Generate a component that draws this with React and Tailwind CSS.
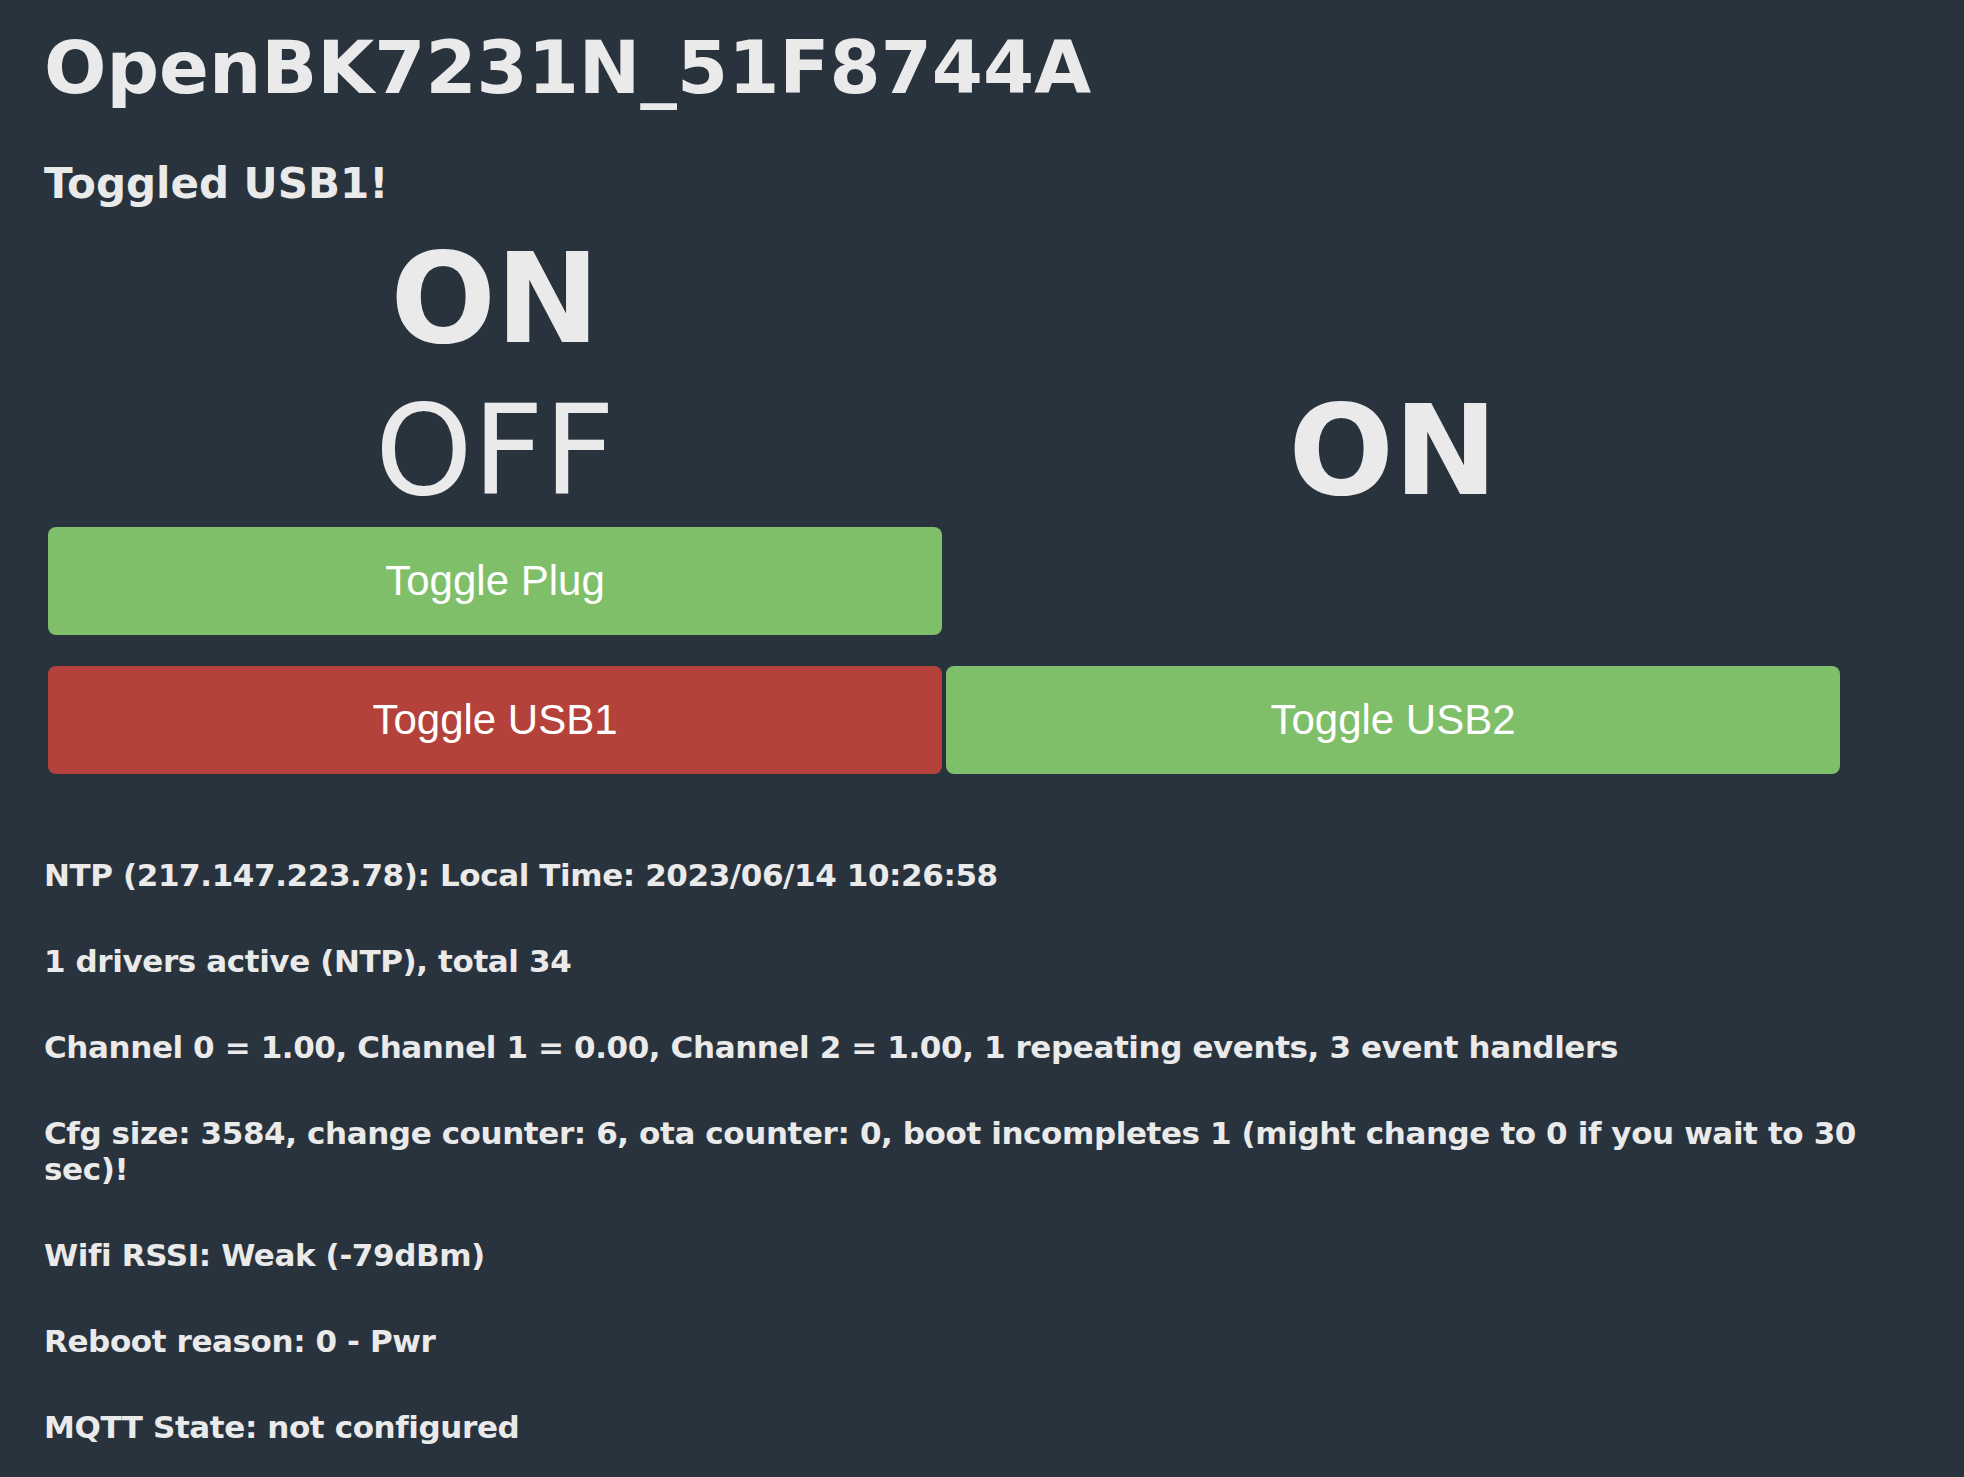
import React from 'react';

const info = [
  'NTP (217.147.223.78): Local Time: 2023/06/14 10:26:58',
  '1 drivers active (NTP), total 34',
  'Channel 0 = 1.00, Channel 1 = 0.00, Channel 2 = 1.00, 1 repeating events, 3 event handlers',
  'Cfg size: 3584, change counter: 6, ota counter: 0, boot incompletes 1 (might change to 0 if you wait to 30 sec)!',
  'Wifi RSSI: Weak (-79dBm)',
  'Reboot reason: 0 - Pwr',
  'MQTT State: not configured',
];

function ToggleButton({ label, on }) {
  return (
    <button
      className={`h-[108px] w-full rounded-[8px] text-[42px] leading-none text-white font-['Liberation_Sans',Arial,sans-serif] ${
        on ? 'bg-[#7fbf6a]' : 'bg-[#b5423a]'
      }`}
    >
      {label}
    </button>
  );
}

export default function App() {
  return (
    <div className="min-h-screen bg-[#29333e] text-[#eaeaea] font-['DejaVu_Sans',Verdana,sans-serif] pt-[25px] pl-[44px] pr-[80px] pb-[30px]">
      {/* Header */}
      <h1 className="text-[73.5px] leading-[86px] font-bold">OpenBK7231N_51F8744A</h1>
      <h3 className="mt-[49px] text-[42px] leading-[48px] font-bold">Toggled USB1!</h3>

      {/* Channel states */}
      <div className="ml-[4px] mt-[19px] w-[1792px] grid grid-cols-2 gap-x-[4px] text-[124px] leading-[144px] text-center">
        <div className="font-bold">ON</div>
        <div />
        <div className="mt-[8px]">OFF</div>
        <div className="mt-[8px] font-bold">ON</div>
      </div>

      {/* Toggle buttons */}
      <div className="ml-[4px] mt-[4px] w-[1792px] grid grid-cols-2 gap-x-[4px]">
        <ToggleButton label="Toggle Plug" on />
        <div />
      </div>
      <div className="ml-[4px] mt-[31px] w-[1792px] grid grid-cols-2 gap-x-[4px]">
        <ToggleButton label="Toggle USB1" on={false} />
        <ToggleButton label="Toggle USB2" on />
      </div>

      {/* Status lines */}
      <div className="mt-[83px] flex flex-col gap-[50px]">
        {info.map((line) => (
          <p key={line} className="text-[31px] leading-[36px] font-bold tracking-[-0.4px]">
            {line}
          </p>
        ))}
      </div>
    </div>
  );
}
